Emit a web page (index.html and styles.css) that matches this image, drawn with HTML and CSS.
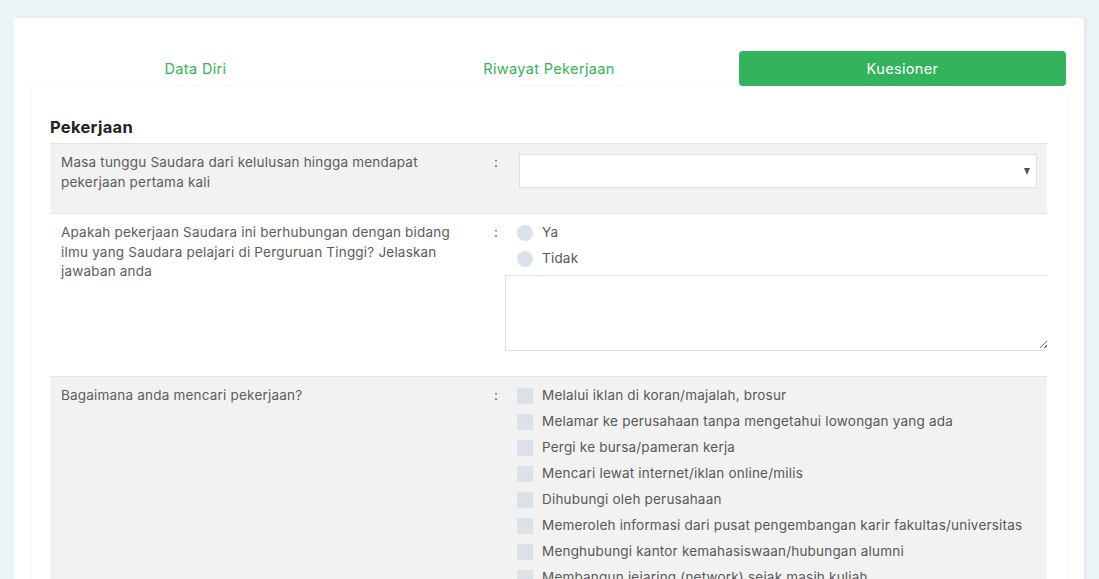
FILE: index.html
```html
<!DOCTYPE html>
<html lang="id">
<head>
<meta charset="utf-8">
<title>Kuesioner</title>
<link rel="stylesheet" href="styles.css">
</head>
<body>
<div class="card">
  <div class="tabs">
    <div class="tab">Data Diri</div>
    <div class="tab">Riwayat Pekerjaan</div>
    <div class="tab active">Kuesioner</div>
  </div>
  <div class="panel">
    <h3 class="heading">Pekerjaan</h3>

    <div class="row gray first">
      <div class="label">Masa tunggu Saudara dari kelulusan hingga mendapat pekerjaan pertama kali</div>
      <div class="colon">:</div>
      <div class="answer">
        <div class="select"><span class="caret"></span></div>
      </div>
    </div>

    <div class="row">
      <div class="label">Apakah pekerjaan Saudara ini berhubungan dengan bidang ilmu yang Saudara pelajari di Perguruan Tinggi? Jelaskan jawaban anda</div>
      <div class="colon">:</div>
      <div class="answer">
        <div class="opt"><span class="radio"></span>Ya</div>
        <div class="opt"><span class="radio"></span>Tidak</div>
        <div class="textarea"><span class="grip"></span></div>
      </div>
    </div>

    <div class="row gray">
      <div class="label">Bagaimana anda mencari pekerjaan?</div>
      <div class="colon">:</div>
      <div class="answer">
        <div class="opt"><span class="check"></span>Melalui iklan di koran/majalah, brosur</div>
        <div class="opt"><span class="check"></span>Melamar ke perusahaan tanpa mengetahui lowongan yang ada</div>
        <div class="opt"><span class="check"></span>Pergi ke bursa/pameran kerja</div>
        <div class="opt"><span class="check"></span>Mencari lewat internet/iklan online/milis</div>
        <div class="opt"><span class="check"></span>Dihubungi oleh perusahaan</div>
        <div class="opt"><span class="check"></span>Memeroleh informasi dari pusat pengembangan karir fakultas/universitas</div>
        <div class="opt"><span class="check"></span>Menghubungi kantor kemahasiswaan/hubungan alumni</div>
        <div class="opt"><span class="check"></span>Membangun jejaring (network) sejak masih kuliah</div>
      </div>
    </div>
  </div>
</div>
</body>
</html>
```

FILE: styles.css
```css
* { box-sizing: border-box; }
html, body { height: 100%; }
body {
  margin: 0;
  background: #edf4f7;
  font-family: Inter, "Open Sans", sans-serif;
  color: #5c5c5c;
  padding: 18px 15px 0 14px;
  overflow: hidden;
}
.card {
  background: #fff;
  width: 1070px;
  min-height: 700px;
  padding: 33px 18px 0 18px;
  box-shadow: 2px 0 3px rgba(0,0,0,0.06);
}
.tabs {
  display: flex;
  gap: 26.5px;
}
.tab {
  flex: 1;
  height: 35px;
  display: flex;
  align-items: center;
  justify-content: center;
  font-size: 14.5px;
  letter-spacing: 0.35px;
  color: #35b35a;
  border-radius: 4px;
  padding-bottom: 1px;
}
.tab.active {
  background: #33b35c;
  color: #fff;
}
.panel {
  background: #fff;
  box-shadow: 0 0 3px rgba(0,0,0,0.09);
  padding: 31px 19px 0 18px;
  min-height: 600px;
}
.heading {
  margin: 0 0 6px;
  font-size: 16.5px;
  line-height: 20px;
  font-weight: 700;
  letter-spacing: 0.3px;
  color: #222;
}
.row {
  display: grid;
  grid-template-columns: 425px 19px 1fr;
  border-top: 1px solid #e2e3e6;
  padding: 9px 10px 20px 11px;
  font-size: 13.5px;
  letter-spacing: 0.2px;
  line-height: 19.5px;
  overflow: hidden;
}
.row.first { padding-bottom: 21px; }
.row.gray { background: #f2f2f2; }
.label { padding-right: 22px; }
.colon { padding-left: 8px; }
.answer {
  display: flex;
  flex-direction: column;
  margin-right: -10px;
}
.select {
  margin: 1px 10px 0 14px;
  height: 34px;
  background: #fff;
  border: 1px solid #dde0e4;
  display: flex;
  align-items: center;
  justify-content: flex-end;
  padding-right: 6px;
}
.caret {
  width: 0;
  height: 0;
  border-left: 3.5px solid transparent;
  border-right: 3.5px solid transparent;
  border-top: 7px solid #555;
}
.opt {
  display: flex;
  align-items: center;
  height: 26px;
  margin-top: -3px;
  margin-bottom: 3px;
  padding-left: 12px;
  color: #585858;
}
.radio, .check {
  width: 16px;
  height: 16px;
  background: #dae1e8;
  margin-right: 9px;
  flex: none;
}
.radio { border-radius: 50%; }
.textarea {
  height: 76px;
  width: 560px;
  margin-bottom: 5px;
  background: #fff;
  border: 1px solid #dfe1e5;
  border-right: none;
  position: relative;
}
.grip {
  position: absolute;
  right: 16px;
  bottom: 2px;
  width: 9px;
  height: 9px;
  background: linear-gradient(135deg, transparent 45%, #777 45%, #777 53%, transparent 53%, transparent 70%, #777 70%, #777 78%, transparent 78%);
}
```
